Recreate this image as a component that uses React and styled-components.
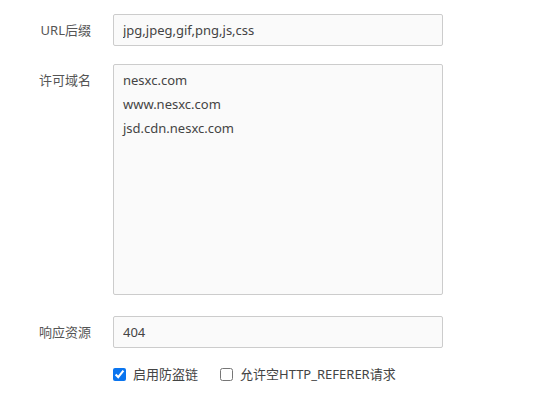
import styled, { createGlobalStyle } from 'styled-components';

const GlobalStyle = createGlobalStyle`
    body {
        margin: 0;
        background: #fff;
        font-family: "Noto Sans", "Noto Sans CJK SC", sans-serif;
        font-size: 13px;
        color: #555;
    }
`

export default function App() {
    return (
        <>
            <GlobalStyle />
            <Form>
                <Row space="18px">
                    <Label>URL后缀</Label>
                    <TextInput defaultValue="jpg,jpeg,gif,png,js,css" />
                </Row>
                <Row space="21px">
                    <Label>许可域名</Label>
                    <TextArea defaultValue={"nesxc.com\nwww.nesxc.com\njsd.cdn.nesxc.com"} />
                </Row>
                <Row space="20px">
                    <Label>响应资源</Label>
                    <TextInput defaultValue="404" />
                </Row>
                <Options>
                    <Check>
                        <input type="checkbox" defaultChecked />
                        启用防盗链
                    </Check>
                    <Check>
                        <input type="checkbox" />
                        允许空HTTP_REFERER请求
                    </Check>
                </Options>
            </Form>
        </>
    )
}

const Form = styled.div`
    padding-top: 14px;
    display: flex;
    flex-direction: column;
`
const Row = styled.div`
    display: flex;
    align-items: flex-start;
    margin-bottom: ${props => props.space};
`
const Label = styled.div`
    width: 91px;
    margin-right: 22px;
    text-align: right;
    line-height: 32px;
    color: #555;
    font-family: "Noto Sans", "Noto Sans CJK SC", sans-serif;
    font-size: 13px;
`
const TextInput = styled.input`
    box-sizing: border-box;
    width: 330px;
    height: 32px;
    padding: 0 9px;
    border: 1px solid #ccc;
    border-radius: 2px;
    background: #fafafa;
    color: #444;
    font-family: "Noto Sans", "Noto Sans CJK SC", sans-serif;
    font-size: 13px;
    outline: none;
`
const TextArea = styled.textarea`
    box-sizing: border-box;
    width: 330px;
    height: 231px;
    padding: 3px 9px;
    border: 1px solid #ccc;
    border-radius: 2px;
    background: #fafafa;
    color: #444;
    font-family: "Noto Sans", "Noto Sans CJK SC", sans-serif;
    font-size: 13px;
    line-height: 24px;
    resize: none;
    outline: none;
`
const Options = styled.div`
    display: flex;
    gap: 22px;
    padding-left: 113px;
`
const Check = styled.label`
    display: flex;
    align-items: center;
    gap: 7px;
    color: #444;
    font-size: 13px;
    line-height: 13px;

    input {
        width: 13px;
        height: 13px;
        margin: 0;
        accent-color: #0b75ef;
    }
`
